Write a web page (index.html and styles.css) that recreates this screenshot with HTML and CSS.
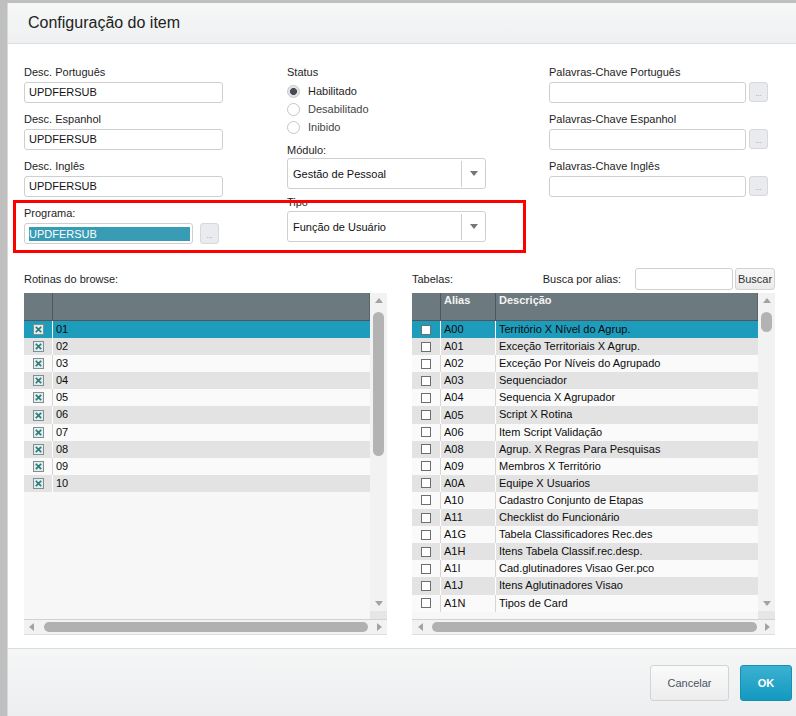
FILE: index.html
```html
<!DOCTYPE html>
<html lang="pt-BR">
<head>
<meta charset="utf-8">
<title>Configuração do item</title>
<link rel="stylesheet" href="styles.css">
</head>
<body>
<div class="dialog">
  <header class="dlg-head"><h1>Configuração do item</h1></header>
  <main class="dlg-body">
    <section class="form-grid">
      <div class="col">
        <div class="field"><label class="lbl">Desc. Português</label><div class="inp">UPDFERSUB</div></div>
        <div class="field"><label class="lbl">Desc. Espanhol</label><div class="inp">UPDFERSUB</div></div>
        <div class="field"><label class="lbl">Desc. Inglês</label><div class="inp">UPDFERSUB</div></div>
        <div class="field last"><label class="lbl">Programa:</label>
          <div class="inp-row"><div class="inp prog"><span class="selected">UPDFERSUB</span></div><div class="dots dots-prog">...</div></div>
        </div>
      </div>
      <div class="col">
        <div class="lbl">Status</div>
        <div class="radios">
          <div class="radio"><span class="rdot on"></span><span class="rtext on">Habilitado</span></div>
          <div class="radio"><span class="rdot"></span><span class="rtext">Desabilitado</span></div>
          <div class="radio"><span class="rdot"></span><span class="rtext">Inibido</span></div>
        </div>
        <div class="lbl lbl-mod">Módulo:</div>
        <div class="select"><span class="sel-text">Gestão de Pessoal</span><span class="sel-arrow"><span class="tri-down dark"></span></span></div>
        <div class="lbl lbl-tipo">Tipo</div>
        <div class="select"><span class="sel-text">Função de Usuário</span><span class="sel-arrow"><span class="tri-down dark"></span></span></div>
      </div>
      <div class="col">
        <div class="field"><label class="lbl">Palavras-Chave Português</label><div class="inp-row"><div class="inp kw"></div><div class="dots">...</div></div></div>
        <div class="field"><label class="lbl">Palavras-Chave Espanhol</label><div class="inp-row"><div class="inp kw"></div><div class="dots">...</div></div></div>
        <div class="field last"><label class="lbl">Palavras-Chave Inglês</label><div class="inp-row"><div class="inp kw"></div><div class="dots">...</div></div></div>
      </div>
    </section>

    <section class="lists">
      <div class="panel">
        <div class="panel-bar"><span>Rotinas do browse:</span></div>
        <div class="gridbox">
          <div class="view">
            <div class="ghead cols-l"><div class="hc"></div><div class="hc last"></div></div>
            <div class="row cols-l sel"><div class="c b"><span class="ck on"><svg width="11" height="11" viewBox="0 0 11 11"><rect x="0.5" y="0.5" width="10" height="10" fill="#e4eeee" stroke="#7f8f8f"/><path d="M2.8 2.8 L8.2 8.2 M8.2 2.8 L2.8 8.2" stroke="#2e7c7c" stroke-width="1.7"/></svg></span></div><div class="c t">01</div></div>
            <div class="row cols-l alt"><div class="c b"><span class="ck on"><svg width="11" height="11" viewBox="0 0 11 11"><rect x="0.5" y="0.5" width="10" height="10" fill="#e4eeee" stroke="#7f8f8f"/><path d="M2.8 2.8 L8.2 8.2 M8.2 2.8 L2.8 8.2" stroke="#2e7c7c" stroke-width="1.7"/></svg></span></div><div class="c t">02</div></div>
            <div class="row cols-l lite"><div class="c b"><span class="ck on"><svg width="11" height="11" viewBox="0 0 11 11"><rect x="0.5" y="0.5" width="10" height="10" fill="#e4eeee" stroke="#7f8f8f"/><path d="M2.8 2.8 L8.2 8.2 M8.2 2.8 L2.8 8.2" stroke="#2e7c7c" stroke-width="1.7"/></svg></span></div><div class="c t">03</div></div>
            <div class="row cols-l alt"><div class="c b"><span class="ck on"><svg width="11" height="11" viewBox="0 0 11 11"><rect x="0.5" y="0.5" width="10" height="10" fill="#e4eeee" stroke="#7f8f8f"/><path d="M2.8 2.8 L8.2 8.2 M8.2 2.8 L2.8 8.2" stroke="#2e7c7c" stroke-width="1.7"/></svg></span></div><div class="c t">04</div></div>
            <div class="row cols-l lite"><div class="c b"><span class="ck on"><svg width="11" height="11" viewBox="0 0 11 11"><rect x="0.5" y="0.5" width="10" height="10" fill="#e4eeee" stroke="#7f8f8f"/><path d="M2.8 2.8 L8.2 8.2 M8.2 2.8 L2.8 8.2" stroke="#2e7c7c" stroke-width="1.7"/></svg></span></div><div class="c t">05</div></div>
            <div class="row cols-l alt"><div class="c b"><span class="ck on"><svg width="11" height="11" viewBox="0 0 11 11"><rect x="0.5" y="0.5" width="10" height="10" fill="#e4eeee" stroke="#7f8f8f"/><path d="M2.8 2.8 L8.2 8.2 M8.2 2.8 L2.8 8.2" stroke="#2e7c7c" stroke-width="1.7"/></svg></span></div><div class="c t">06</div></div>
            <div class="row cols-l lite"><div class="c b"><span class="ck on"><svg width="11" height="11" viewBox="0 0 11 11"><rect x="0.5" y="0.5" width="10" height="10" fill="#e4eeee" stroke="#7f8f8f"/><path d="M2.8 2.8 L8.2 8.2 M8.2 2.8 L2.8 8.2" stroke="#2e7c7c" stroke-width="1.7"/></svg></span></div><div class="c t">07</div></div>
            <div class="row cols-l alt"><div class="c b"><span class="ck on"><svg width="11" height="11" viewBox="0 0 11 11"><rect x="0.5" y="0.5" width="10" height="10" fill="#e4eeee" stroke="#7f8f8f"/><path d="M2.8 2.8 L8.2 8.2 M8.2 2.8 L2.8 8.2" stroke="#2e7c7c" stroke-width="1.7"/></svg></span></div><div class="c t">08</div></div>
            <div class="row cols-l lite"><div class="c b"><span class="ck on"><svg width="11" height="11" viewBox="0 0 11 11"><rect x="0.5" y="0.5" width="10" height="10" fill="#e4eeee" stroke="#7f8f8f"/><path d="M2.8 2.8 L8.2 8.2 M8.2 2.8 L2.8 8.2" stroke="#2e7c7c" stroke-width="1.7"/></svg></span></div><div class="c t">09</div></div>
            <div class="row cols-l alt"><div class="c b"><span class="ck on"><svg width="11" height="11" viewBox="0 0 11 11"><rect x="0.5" y="0.5" width="10" height="10" fill="#e4eeee" stroke="#7f8f8f"/><path d="M2.8 2.8 L8.2 8.2 M8.2 2.8 L2.8 8.2" stroke="#2e7c7c" stroke-width="1.7"/></svg></span></div><div class="c t">10</div></div>
          </div>
          <div class="vscroll">
            <span class="tri-up"></span>
            <span class="vthumb long"></span>
            <span class="vspacer"></span>
            <span class="tri-down"></span>
            <span class="corner"></span>
          </div>
          <div class="hscroll">
            <span class="tri-left l-first"></span>
            <span class="hthumb l-thumb"></span>
            <span class="tri-right l-last"></span>
          </div>
        </div>
      </div>

      <div class="panel">
        <div class="panel-bar">
          <span class="grow">Tabelas:</span>
          <span class="busca">Busca por alias:</span>
          <div class="inp search"></div>
          <div class="btn-buscar">Buscar</div>
        </div>
        <div class="gridbox">
          <div class="view">
            <div class="ghead cols-r"><div class="hc"></div><div class="hc">Alias</div><div class="hc last">Descrição</div></div>
            <div class="row cols-r sel"><div class="c b"><span class="box"></span></div><div class="c b t">A00</div><div class="c t">Território X Nível do Agrup.</div></div>
            <div class="row cols-r alt"><div class="c b"><span class="box"></span></div><div class="c b t">A01</div><div class="c t">Exceção Territoriais X Agrup.</div></div>
            <div class="row cols-r lite"><div class="c b"><span class="box"></span></div><div class="c b t">A02</div><div class="c t">Exceção Por Níveis do Agrupado</div></div>
            <div class="row cols-r alt"><div class="c b"><span class="box"></span></div><div class="c b t">A03</div><div class="c t">Sequenciador</div></div>
            <div class="row cols-r lite"><div class="c b"><span class="box"></span></div><div class="c b t">A04</div><div class="c t">Sequencia X Agrupador</div></div>
            <div class="row cols-r alt"><div class="c b"><span class="box"></span></div><div class="c b t">A05</div><div class="c t">Script X Rotina</div></div>
            <div class="row cols-r lite"><div class="c b"><span class="box"></span></div><div class="c b t">A06</div><div class="c t">Item Script Validação</div></div>
            <div class="row cols-r alt"><div class="c b"><span class="box"></span></div><div class="c b t">A08</div><div class="c t">Agrup. X Regras Para Pesquisas</div></div>
            <div class="row cols-r lite"><div class="c b"><span class="box"></span></div><div class="c b t">A09</div><div class="c t">Membros X Território</div></div>
            <div class="row cols-r alt"><div class="c b"><span class="box"></span></div><div class="c b t">A0A</div><div class="c t">Equipe X Usuarios</div></div>
            <div class="row cols-r lite"><div class="c b"><span class="box"></span></div><div class="c b t">A10</div><div class="c t">Cadastro Conjunto de Etapas</div></div>
            <div class="row cols-r alt"><div class="c b"><span class="box"></span></div><div class="c b t">A11</div><div class="c t">Checklist do Funcionário</div></div>
            <div class="row cols-r lite"><div class="c b"><span class="box"></span></div><div class="c b t">A1G</div><div class="c t">Tabela Classificadores Rec.des</div></div>
            <div class="row cols-r alt"><div class="c b"><span class="box"></span></div><div class="c b t">A1H</div><div class="c t">Itens Tabela Classif.rec.desp.</div></div>
            <div class="row cols-r lite"><div class="c b"><span class="box"></span></div><div class="c b t">A1I</div><div class="c t">Cad.glutinadores Visao Ger.pco</div></div>
            <div class="row cols-r alt"><div class="c b"><span class="box"></span></div><div class="c b t">A1J</div><div class="c t">Itens Aglutinadores Visao</div></div>
            <div class="row cols-r lite"><div class="c b"><span class="box"></span></div><div class="c b t">A1N</div><div class="c t">Tipos de Card</div></div>
          </div>
          <div class="vscroll">
            <span class="tri-up"></span>
            <span class="vthumb short"></span>
            <span class="vspacer"></span>
            <span class="tri-down"></span>
            <span class="corner"></span>
          </div>
          <div class="hscroll">
            <span class="tri-left r-first"></span>
            <span class="hthumb r-thumb"></span>
            <span class="tri-right r-last"></span>
          </div>
        </div>
      </div>
    </section>
  </main>
  <footer class="dlg-foot">
    <div class="btn btn-cancel">Cancelar</div>
    <div class="btn btn-ok">OK</div>
  </footer>
</div>
<div class="highlight"></div>
</body>
</html>
```

FILE: styles.css
```css
html, body {
  margin: 0;
  padding: 0;
}
body {
  width: 796px;
  height: 716px;
  overflow: hidden;
  background: #bfbfbf;
  font-family: "Liberation Sans", Arial, sans-serif;
  font-size: 11px;
  color: #222;
  position: relative;
}
.dialog {
  margin: 3px 0 0 7px;
  width: 789px;
  height: 713px;
  background: #fff;
  border-left: 1px solid #d8d8d8;
  box-sizing: border-box;
  display: flex;
  flex-direction: column;
}
.dlg-head {
  height: 41px;
  flex: none;
  box-sizing: border-box;
  border-bottom: 1px solid #dcdddf;
  background: linear-gradient(#f6f7f7, #eef0f1);
  display: flex;
  align-items: center;
  padding-left: 20px;
}
.dlg-head h1 {
  margin: 0;
  font-size: 16px;
  font-weight: normal;
  color: #222;
}
.dlg-body {
  height: 604px;
  flex: none;
  box-sizing: border-box;
  padding: 21px 0 0 16px;
}

/* top form */
.form-grid {
  display: grid;
  grid-template-columns: 200px 199px 220px;
  column-gap: 63px;
  align-items: start;
}
.field { margin-bottom: 9px; }
.field.last { margin-bottom: 0; }
.lbl {
  display: block;
  height: 14px;
  line-height: 14px;
  margin-bottom: 3px;
  color: #1e1e1e;
  white-space: nowrap;
}
.inp {
  width: 199px;
  height: 21px;
  box-sizing: border-box;
  border: 1px solid #cfcfcf;
  border-radius: 3px;
  padding: 0 4px;
  line-height: 19px;
  color: #111;
  background: #fff;
}
.inp-row {
  display: flex;
  align-items: flex-start;
}
.inp.prog {
  width: 169px;
  padding: 3px 2px 0 4px;
}
.selected {
  display: block;
  height: 14px;
  line-height: 14px;
  background: #389cb4;
  color: #fff;
}
.dots {
  width: 19px;
  height: 20px;
  box-sizing: border-box;
  margin-left: 3px;
  border: 1px solid #d5d8dc;
  border-radius: 3px;
  background: #e9ebee;
  color: #9a9a9a;
  font-size: 8px;
  line-height: 22px;
  text-align: center;
}
.dots-prog {
  margin-left: 7px;
  height: 21px;
  line-height: 23px;
}
.inp.kw { width: 197px; }

/* radios */
.radios { margin-top: 1px; }
.radio {
  height: 18px;
  display: flex;
  align-items: center;
}
.rdot {
  width: 13px;
  height: 13px;
  box-sizing: border-box;
  border: 1px solid #c6c6c6;
  border-radius: 50%;
  background: #fff;
  margin-right: 8px;
}
.rdot.on {
  background: radial-gradient(circle, #454c58 0, #454c58 3.2px, #e4e4e4 3.8px);
}
.rtext { color: #444; }
.rtext.on { color: #1e1e1e; }
.lbl-mod { margin-top: 7px; margin-bottom: 1px; }
.lbl-tipo { margin-top: 6px; margin-bottom: 2px; }
.select {
  width: 199px;
  height: 31px;
  box-sizing: border-box;
  border: 1px solid #cfcfcf;
  border-radius: 3px;
  display: flex;
  align-items: center;
  color: #111;
}
.sel-text { flex: 1; padding-left: 5px; }
.sel-arrow {
  width: 23px;
  height: 26px;
  border-left: 1px solid #cfcfcf;
  display: flex;
  align-items: center;
  justify-content: center;
}

/* lists */
.lists {
  margin-top: 24px;
  display: grid;
  grid-template-columns: 363px 363px;
  column-gap: 25px;
}
.panel-bar {
  height: 22px;
  margin-bottom: 3px;
  display: flex;
  align-items: center;
  color: #1e1e1e;
}
.grow { flex: 1; }
.busca { margin-right: 14px; }
.inp.search { width: 98px; height: 22px; margin-right: 2px; }
.btn-buscar {
  width: 40px;
  height: 22px;
  box-sizing: border-box;
  border: 1px solid #d2d2d2;
  border-radius: 3px;
  background: linear-gradient(#f7f7f7, #ebebeb);
  color: #333;
  line-height: 20px;
  text-align: center;
}
.gridbox {
  width: 363px;
  height: 342px;
  display: grid;
  grid-template-columns: 346px 17px;
  grid-template-rows: 326px 16px;
}
.view {
  background: #f7f7f7;
  overflow: hidden;
}
.ghead {
  height: 28px;
  box-sizing: border-box;
  background: #6c797e;
  border-bottom: 1px solid #4c575b;
  display: grid;
}
.cols-l { grid-template-columns: 29px 1fr; }
.cols-r { grid-template-columns: 29px 55px 1fr; }
.hc {
  border-right: 1px solid #4c575b;
  color: #f4f4f4;
  font-weight: bold;
  padding: 0 0 0 3px;
  line-height: 14px;
}
.hc.last { border-right: 1px solid #5a666a; }
.row {
  display: grid;
  height: 17.1px;
  line-height: 17px;
  color: #0c0c0c;
}
.row.sel { background: #1e9cbc; }
.row.alt { background: #e3e3e3; }
.row.lite { background: #fafafa; }
.c { overflow: hidden; white-space: nowrap; }
.c.b {
  border-right: 1px solid #ffffff;
  display: flex;
  align-items: center;
  justify-content: center;
}
.row.lite .c.b { border-right-color: #d6d6d6; }
.c.t { padding-left: 3px; }
.c.b.t { justify-content: flex-start; }
.ck { display: flex; }
.box {
  width: 10px;
  height: 10px;
  box-sizing: border-box;
  border: 1px solid #6e6e6e;
  background: #fff;
}

/* scrollbars */
.vscroll {
  background: #f2f2f2;
  display: flex;
  flex-direction: column;
  align-items: center;
}
.vscroll .tri-up { margin-top: 5px; }
.vthumb {
  width: 11px;
  border-radius: 6px;
  background: #b3b3b3;
  margin-top: 9px;
}
.vthumb.long { height: 144px; }
.vthumb.short { height: 20px; }
.vspacer { flex: 1; }
.corner {
  margin-top: 5px;
  width: 17px;
  height: 8px;
  background: #e6e6e6;
}
.hscroll {
  grid-column: 1 / span 2;
  box-sizing: border-box;
  background: #f2f2f2;
  border-top: 1px solid #d2d2d2;
  border-bottom: 1px solid #dedede;
  display: flex;
  align-items: center;
}
.hthumb {
  height: 10px;
  border-radius: 5px;
  background: #b1b1b1;
}
.l-first { margin-left: 5px; }
.l-thumb { margin-left: 10px; width: 324px; }
.l-last { margin-left: 9px; }
.r-first { margin-left: 6px; }
.r-thumb { margin-left: 9px; width: 325px; }
.r-last { margin-left: 8px; }
.tri-up, .tri-down, .tri-left, .tri-right {
  width: 0;
  height: 0;
  flex: none;
}
.tri-up {
  border-left: 4px solid transparent;
  border-right: 4px solid transparent;
  border-bottom: 5px solid #a3a3a3;
}
.tri-down {
  border-left: 4px solid transparent;
  border-right: 4px solid transparent;
  border-top: 5px solid #a3a3a3;
}
.tri-down.dark { border-top-color: #757575; }
.tri-left {
  border-top: 4px solid transparent;
  border-bottom: 4px solid transparent;
  border-right: 5px solid #a3a3a3;
}
.tri-right {
  border-top: 4px solid transparent;
  border-bottom: 4px solid transparent;
  border-left: 5px solid #a3a3a3;
}

/* footer */
.dlg-foot {
  flex: 1;
  box-sizing: border-box;
  border-top: 1px solid #dcdcdc;
  background: linear-gradient(#f5f6f6, #eceef0);
  display: flex;
  align-items: center;
  justify-content: flex-end;
  padding-right: 4px;
  gap: 11px;
}
.btn {
  height: 36px;
  box-sizing: border-box;
  border-radius: 3px;
  display: flex;
  align-items: center;
  justify-content: center;
}
.btn-cancel {
  width: 79px;
  border: 1px solid #d3d3d3;
  background: linear-gradient(#fafafa, #ededed);
  color: #4b5465;
}
.btn-ok {
  width: 52px;
  border: 1px solid #1690b2;
  background: linear-gradient(#3cb1d2, #1399c0);
  color: #fff;
  font-weight: bold;
}

/* annotation overlay */
.highlight {
  position: absolute;
  left: 13px;
  top: 200px;
  width: 513px;
  height: 53px;
  box-sizing: border-box;
  border: 3px solid #ff0000;
}
```
